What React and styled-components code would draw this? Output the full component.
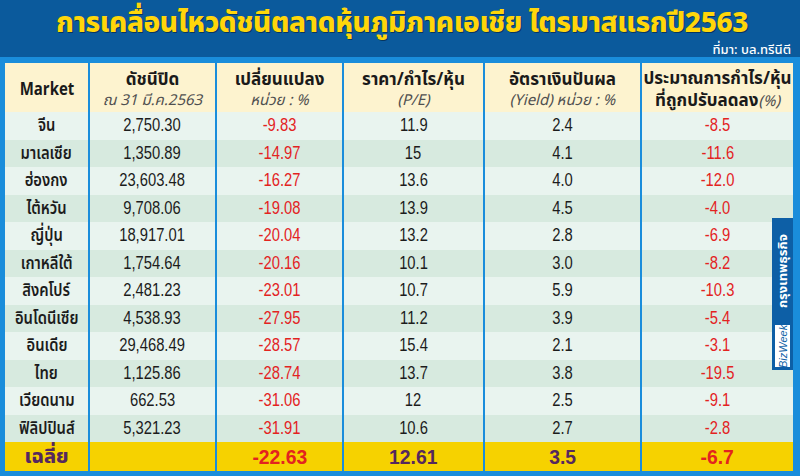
import React from "react";
import styled, { createGlobalStyle } from "styled-components";

const GlobalStyle = createGlobalStyle`
	html, body {
		margin: 0;
		padding: 0;
		background: #0b5a9c;
	}
	* {
		box-sizing: border-box;
	}
`;

const Page = styled.div`
	width: 800px;
	height: 476px;
	background: #0b5a9c;
	display: flex;
	flex-direction: column;
	font-family: "Noto Sans Thai", "Liberation Sans", "Noto Sans", sans-serif;
	overflow: hidden;
`;
const TitleBar = styled.div`
	height: 42px;
	display: flex;
	align-items: center;
	justify-content: center;
	padding-top: 6px;
	padding-left: 4px;
`;
const Title = styled.h1`
	margin: 0;
	font-size: 28px;
	line-height: 34px;
	font-weight: 800;
	color: #ffd60a;
	letter-spacing: -0.4px;
	text-shadow: 1px 1px 0 #06365f;
	white-space: nowrap;
`;
const Source = styled.div`
	height: 15px;
	padding-right: 9px;
	text-align: right;
	color: #ffffff;
	font-size: 13px;
	line-height: 17px;
	font-weight: 500;
`;
const Frame = styled.div`
	position: relative;
	flex: 1;
	background: #1a8ddb;
	padding: 6px 7px 4px 5px;
`;
const Table = styled.div`
	display: grid;
	grid-template-columns: 83px 127px 127px 141px 157px 1fr;
	grid-template-rows: 49px repeat(12, 27.5px) 29px;
`;
const HeadCell = styled.div`
	background: #fdf3cf;
	display: flex;
	flex-direction: column;
	align-items: center;
	justify-content: center;
	padding-top: 4px;
	border-left: ${(p) => (p.first ? "none" : "2px solid #1a8ddb")};
	color: #1a1a1a;
	font-weight: 700;
	font-size: 17px;
	line-height: 22px;
	text-align: center;
	white-space: nowrap;
`;
const Sub = styled.span`
	font-style: italic;
	font-weight: 400;
	font-size: 15px;
	color: #505050;
	line-height: 19px;
`;
const Cell = styled.div`
	background: ${(p) => (p.odd ? "#d7eadf" : "#e9f4ef")};
	display: flex;
	align-items: center;
	justify-content: center;
	border-left: ${(p) => (p.first ? "none" : "2px solid #1a8ddb")};
	color: ${(p) => (p.red ? "#e3231f" : "#1c1c1c")};
	font-size: 18px;
	font-weight: ${(p) => (p.first ? 600 : 400)};
	font-family: ${(p) =>
		p.first ? "inherit" : '"Liberation Sans", sans-serif'};
	white-space: nowrap;
`;
const Squeeze = styled.span`
	display: inline-block;
	transform: scaleX(${(p) => p.sx || 0.82});
`;
const FootCell = styled.div`
	background: #f6d200;
	display: flex;
	align-items: center;
	justify-content: center;
	border-left: ${(p) => (p.first ? "none" : "2px solid #1a8ddb")};
	color: ${(p) => (p.red ? "#e3231f" : "#55285e")};
	font-weight: 800;
	font-size: ${(p) => (p.first ? "20px" : "21px")};
	font-family: ${(p) =>
		p.first ? "inherit" : '"Liberation Sans", sans-serif'};
`;
const Badge = styled.div`
	position: absolute;
	right: 7px;
	top: 161px;
	width: 21px;
	display: flex;
	flex-direction: column;
	border: 1px solid #0d5fa6;
`;
const BadgeName = styled.div`
	background: #0d5fa6;
	color: #fff;
	height: 104px;
	writing-mode: vertical-rl;
	transform: rotate(180deg);
	display: flex;
	align-items: center;
	justify-content: center;
	font-size: 13px;
	font-weight: 700;
`;
const BadgeTag = styled.div`
	background: #fff;
	color: #0d5fa6;
	height: 46px;
	writing-mode: vertical-rl;
	transform: rotate(180deg);
	display: flex;
	align-items: center;
	justify-content: center;
	font-size: 11px;
	font-style: italic;
	font-family: "Liberation Sans", sans-serif;
	border: 2px solid #0d5fa6;
`;

const rows = [
	["จีน", "2,750.30", "-9.83", "11.9", "2.4", "-8.5"],
	["มาเลเซีย", "1,350.89", "-14.97", "15", "4.1", "-11.6"],
	["ฮ่องกง", "23,603.48", "-16.27", "13.6", "4.0", "-12.0"],
	["ไต้หวัน", "9,708.06", "-19.08", "13.9", "4.5", "-4.0"],
	["ญี่ปุ่น", "18,917.01", "-20.04", "13.2", "2.8", "-6.9"],
	["เกาหลีใต้", "1,754.64", "-20.16", "10.1", "3.0", "-8.2"],
	["สิงคโปร์", "2,481.23", "-23.01", "10.7", "5.9", "-10.3"],
	["อินโดนีเซีย", "4,538.93", "-27.95", "11.2", "3.9", "-5.4"],
	["อินเดีย", "29,468.49", "-28.57", "15.4", "2.1", "-3.1"],
	["ไทย", "1,125.86", "-28.74", "13.7", "3.8", "-19.5"],
	["เวียดนาม", "662.53", "-31.06", "12", "2.5", "-9.1"],
	["ฟิลิปปินส์", "5,321.23", "-31.91", "10.6", "2.7", "-2.8"],
];

export default function App() {
	return (
		<Page>
			<GlobalStyle />
			<TitleBar>
				<Title>การเคลื่อนไหวดัชนีตลาดหุ้นภูมิภาคเอเชีย ไตรมาสแรกปี2563</Title>
			</TitleBar>
			<Source>ที่มา: บล.ทรีนีตี</Source>
			<Frame>
				<Table>
					<HeadCell first>
						<Squeeze sx={0.88}>Market</Squeeze>
					</HeadCell>
					<HeadCell>
						ดัชนีปิด
						<Sub>ณ 31 มี.ค.2563</Sub>
					</HeadCell>
					<HeadCell>
						เปลี่ยนแปลง
						<Sub>หน่วย : %</Sub>
					</HeadCell>
					<HeadCell>
						ราคา/กำไร/หุ้น
						<Sub>(P/E)</Sub>
					</HeadCell>
					<HeadCell>
						อัตราเงินปันผล
						<Sub>(Yield) หน่วย : %</Sub>
					</HeadCell>
					<HeadCell>
						ประมาณการกำไร/หุ้น
						<span>
							ที่ถูกปรับลดลง<Sub>(%)</Sub>
						</span>
					</HeadCell>
					{rows.map((r, i) =>
						r.map((v, j) => (
							<Cell
								key={i + "-" + j}
								first={j === 0}
								odd={i % 2 === 1}
								red={j === 2 || j === 5}
							>
								<Squeeze>{v}</Squeeze>
							</Cell>
						))
					)}
					<FootCell first>เฉลี่ย</FootCell>
					<FootCell />
					<FootCell red>
						<Squeeze sx={0.92}>-22.63</Squeeze>
					</FootCell>
					<FootCell>
						<Squeeze sx={0.92}>12.61</Squeeze>
					</FootCell>
					<FootCell>
						<Squeeze sx={0.92}>3.5</Squeeze>
					</FootCell>
					<FootCell red>
						<Squeeze sx={0.92}>-6.7</Squeeze>
					</FootCell>
				</Table>
				<Badge>
					<BadgeName>กรุงเทพธุรกิจ</BadgeName>
					<BadgeTag>BizWeek</BadgeTag>
				</Badge>
			</Frame>
		</Page>
	);
}
